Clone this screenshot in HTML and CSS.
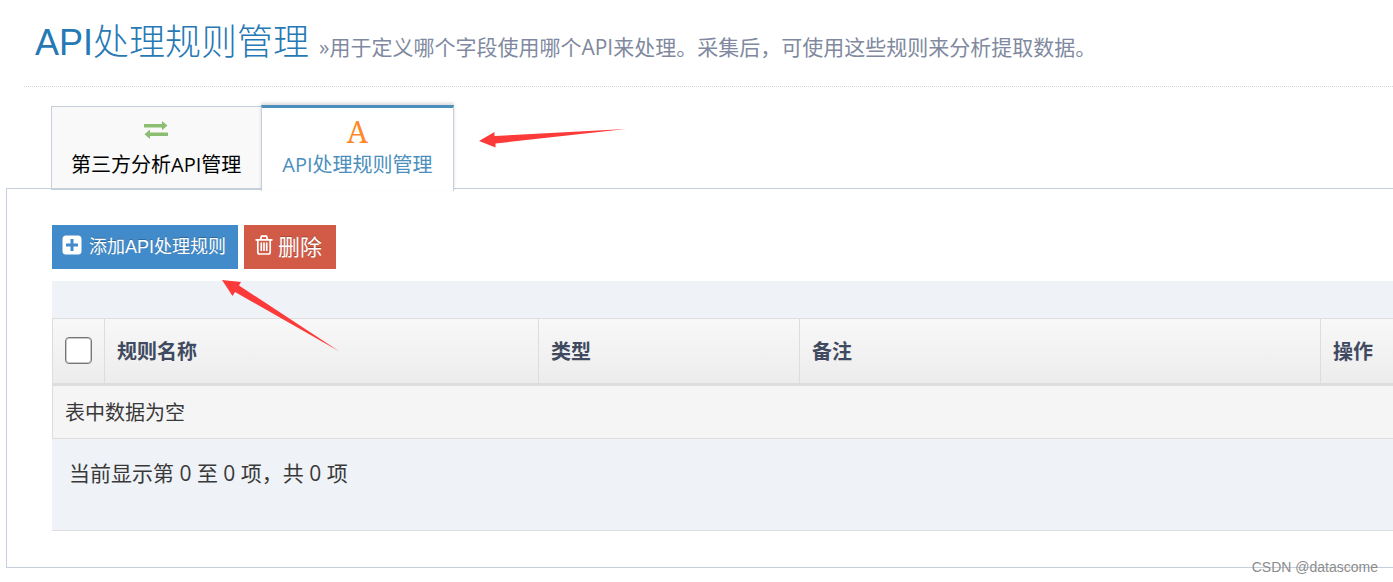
FILE: index.html
```html
<!DOCTYPE html>
<html lang="zh-CN">
<head>
    <meta charset="UTF-8">
    <title>API处理规则管理</title>
    <link rel="stylesheet" href="styles.css">
</head>
<body>
<div class="page-header">
    <h1>API处理规则管理 <small>»用于定义哪个字段使用哪个API来处理。采集后，可使用这些规则来分析提取数据。</small></h1>
</div>

<div class="tabbable">
    <ul class="nav-tabs">
        <li>
            <a href="#api">
                <svg class="icon-exchange" width="24" height="18" viewBox="0 0 24 18">
                    <path d="M0.500 3H18V0.500q0-.5.6 0L23.500 4.500 18.600 8.800q-.6.500-.6 0V6.500H0.500q-.5 0-.5-.5V3.500q0-.5.5-.5z"/>
                    <path d="M23.500 11.500H6V9q0-.5-.6 0L.5 13.200l4.900 4.300q.6.500.6 0V15h17.500q.5 0 .5-.5V12q0-.5-.5-.5z"/>
                </svg>
                <span>第三方分析API管理</span>
            </a>
        </li>
        <li class="active">
            <a href="#rule">
                <span class="icon-font">A</span>
                <span>API处理规则管理</span>
            </a>
        </li>
    </ul>

    <div class="tab-content" id="rule">
        <div class="toolbar">
            <button type="button" class="btn btn-primary">
                <svg width="20" height="20" viewBox="0 0 20 20">
                    <path fill="#fff" fill-rule="evenodd" d="M4 0.500h12a3.500 3.500 0 0 1 3.500 3.500v12a3.500 3.500 0 0 1-3.500 3.500H4a3.500 3.500 0 0 1-3.500-3.500V4A3.500 3.500 0 0 1 4 .5zM8.500 4v4.500H4v3h4.500V16h3v-4.500H16v-3h-4.500V4z"/>
                </svg>
                添加API处理规则
            </button>
            <button type="button" class="btn btn-danger">
                <svg width="18" height="20" viewBox="0 0 18 20" fill="none" stroke="#fff" stroke-width="1.7">
                    <path d="M0.500 4.800h17M5.500 4.500l1-3.300h5l1 3.300M2.800 4.500V17q0 2 1.800 2h8.800q1.800 0 1.800-2V4.500M6.300 7.500v8.500M9 7.500v8.500M11.700 7.500v8.500"/>
                </svg>
                删除
            </button>
        </div>

        <div class="table-wrap">
            <table class="table">
                <thead>
                <tr>
                    <th class="col-check"><input type="checkbox" aria-label="全选"></th>
                    <th class="col-name">规则名称</th>
                    <th class="col-type">类型</th>
                    <th class="col-note">备注</th>
                    <th>操作</th>
                </tr>
                </thead>
                <tbody>
                <tr>
                    <td colspan="5">表中数据为空</td>
                </tr>
                </tbody>
            </table>
            <div class="table-info">当前显示第 0 至 0 项，共 0 项</div>
        </div>
    </div>
</div>

<svg class="arrow arrow-tab" width="148" height="20" viewBox="0 0 148 20">
    <path d="M0 13L15.500 4v4L147 1 16.500 15.500v4z"/>
</svg>
<svg class="arrow arrow-btn" width="118" height="72" viewBox="0 0 118 72">
    <path d="M0 0l19 2-2 3.500L117.500 71.500 13 12l-2.500 4z"/>
</svg>
<div class="watermark">CSDN @datascome</div>
</body>
</html>
```

FILE: styles.css
```css
*{
    box-sizing: border-box;
    margin: 0;
    padding: 0;
}
body{
    position: relative;
    padding-bottom: 14px;
    overflow-x: hidden;
    background: #fff;
    color: #393939;
    font-family: "Open Sans", "Noto Sans CJK SC", sans-serif;
    font-size: 20px;
}

/* 标题 */
.page-header{
    margin-left: 24px;
    padding: 17px 0 13px 11px;
    border-bottom: 1px dotted #d8d8d8;
}
.page-header h1{
    color: #2679b5;
    font-family: "Liberation Sans", "Noto Sans CJK SC", sans-serif;
    font-size: 36px;
    font-weight: 300;
    line-height: 52px;
    white-space: nowrap;
}
.page-header small{
    color: #8089a0;
    font-family: "Open Sans", "Noto Sans CJK SC", sans-serif;
    font-size: 21px;
    font-weight: 400;
}

/* 选项卡 */
.tabbable{
    margin: 18px 0 0 6px;
}
.nav-tabs{
    position: relative;
    z-index: 1;
    display: flex;
    align-items: flex-end;
    margin: 0 0 -3px 45px;
    list-style: none;
}
.nav-tabs li{
    margin-bottom: 1px;
}
.nav-tabs a{
    display: flex;
    flex-direction: column;
    align-items: center;
    padding: 10px 20px 7px 19px;
    border: 1px solid #c5d0dc;
    border-right: 0;
    border-bottom-width: 2px;
    background: #f9f9f9;
    color: #000;
    line-height: 32px;
    text-decoration: none;
}
.nav-tabs .active{
    margin-bottom: 0;
}
.nav-tabs .active a{
    padding: 10px 20px;
    border-top: 3px solid #4c8fbd;
    border-right: 1px solid #c5d0dc;
    border-bottom: 0;
    background: #fff;
    box-shadow: 0 -2px 3px rgba(0, 0, 0, .15);
    color: #4c8fbd;
}
.icon-exchange{
    margin: 4px 0 10px;
    fill: #8bbd72;
}
.icon-font{
    margin-bottom: 3px;
    color: #ff892a;
    font-family: "Noto Serif", "DejaVu Serif", "Liberation Serif", serif;
    font-size: 30px;
    line-height: 28px;
}

/* 内容区 */
.tab-content{
    padding: 36px 0 36px 45px;
    border: 1px solid #c5d0dc;
    border-right: 0;
}
.toolbar{
    display: flex;
    gap: 6px;
    margin-bottom: 12px;
}
.btn{
    display: flex;
    align-items: center;
    height: 44px;
    border: 0;
    color: #fff;
    font-family: inherit;
    text-shadow: 0 -1px 0 rgba(0, 0, 0, .25);
    cursor: pointer;
}
.btn-primary{
    gap: 7px;
    padding: 0 12px 4px 10px;
    background: #428bca;
    font-family: "Liberation Sans", "Noto Sans CJK SC", sans-serif;
    font-size: 18px;
}
.btn-danger{
    gap: 5px;
    padding: 0 14px 4px 11px;
    background: #d15b47;
    font-size: 22px;
}

/* 表格 */
.table-wrap{
    padding-top: 37px;
    border-bottom: 1px solid #ddd;
    background: #eff3f8;
}
.table{
    width: 100%;
    border-spacing: 0;
    table-layout: fixed;
    text-align: left;
}
.table th{
    height: 68px;
    padding: 0 12px 2px;
    border-top: 1px solid #ddd;
    border-left: 1px solid #ddd;
    border-bottom: 3px solid #ddd;
    color: #3f4a60;
    white-space: nowrap;
}
.table thead tr{
    background: linear-gradient(to bottom, #f8f8f8, #ececec);
}
.table td{
    height: 53px;
    padding: 0 12px 2px;
    border-left: 1px solid #ddd;
    border-bottom: 1px solid #ddd;
    background: #f5f5f5;
}
.col-check{
    width: 52px;
}
.col-name{
    width: 434px;
}
.col-type{
    width: 261px;
}
.col-note{
    width: 521px;
}
.table input{
    display: block;
    width: 27px;
    height: 27px;
    border: 1px solid #767676;
    border-radius: 4px;
    background: #fff;
    box-shadow: inset 0 0 0 1px #c8c8c8;
    appearance: none;
}
.table input:checked{
    background: #428bca;
}
.table-info{
    padding: 18px 17px 41px;
    font-size: 21px;
    line-height: 32px;
}

/* 指示箭头和水印 */
.arrow{
    position: absolute;
    z-index: 2;
    fill: #fc3a3a;
}
.arrow-tab{
    left: 479px;
    top: 128px;
}
.arrow-btn{
    left: 222px;
    top: 280px;
}
.watermark{
    position: absolute;
    right: 15px;
    bottom: 6px;
    color: #8c8c8c;
    font-family: "Liberation Sans", sans-serif;
    font-size: 14px;
    line-height: 18px;
}
```
